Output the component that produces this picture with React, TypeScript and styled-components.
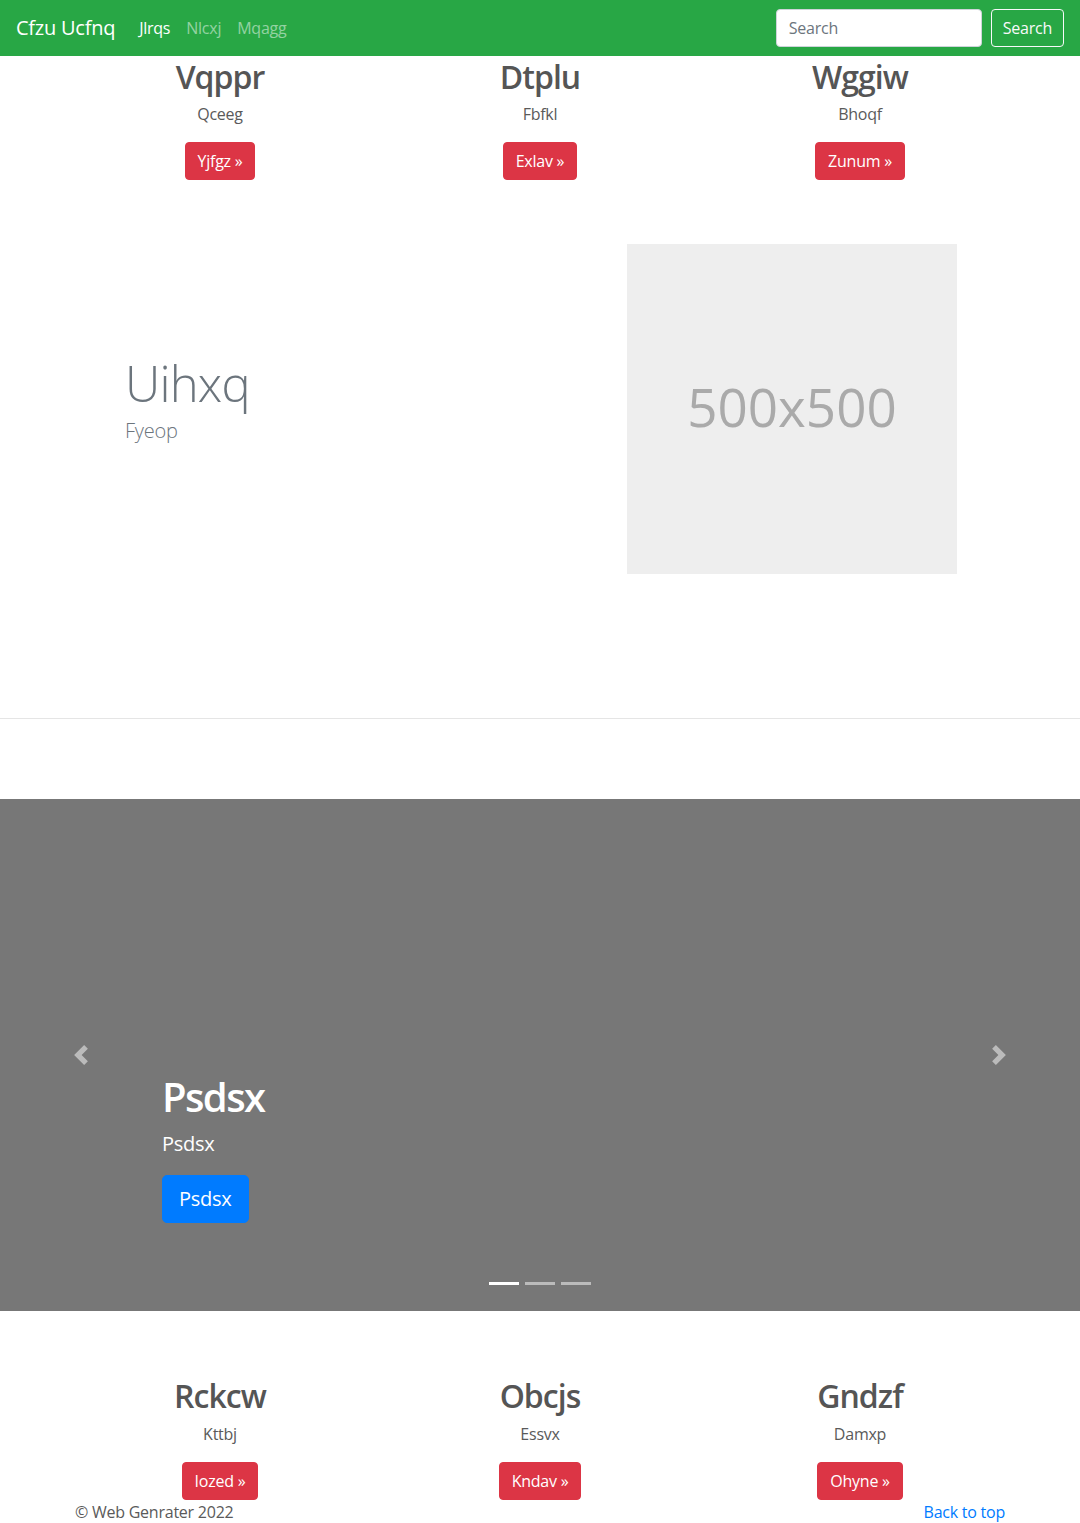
import styled, { createGlobalStyle } from "styled-components";

const GlobalStyle = createGlobalStyle`
  * {
    box-sizing: border-box;
  }

  body {
    margin: 0;
    font-family: "Open Sans", "Noto Sans", "Liberation Sans", sans-serif;
    font-size: 16px;
    line-height: 1.5;
    letter-spacing: -0.015em;
    color: #5a5a5a;
    background: #fff;
  }
`;

type Feature = {
  title: string;
  text: string;
  action: string;
};

const topFeatures: Feature[] = [
  { title: "Vqppr", text: "Qceeg", action: "Yjfgz" },
  { title: "Dtplu", text: "Fbfkl", action: "Exlav" },
  { title: "Wggiw", text: "Bhoqf", action: "Zunum" },
];

const bottomFeatures: Feature[] = [
  { title: "Rckcw", text: "Kttbj", action: "Iozed" },
  { title: "Obcjs", text: "Essvx", action: "Kndav" },
  { title: "Gndzf", text: "Damxp", action: "Ohyne" },
];

const navItems = ["Jlrqs", "Nlcxj", "Mqagg"];

const App = () => {
  return (
    <>
      <GlobalStyle />
      <Navbar>
        <NavLeft>
          <Brand href="#">Cfzu Ucfnq</Brand>
          <NavList>
            {navItems.map((item, i) => (
              <li key={item}>
                <NavLink href="#" $active={i === 0}>
                  {item}
                </NavLink>
              </li>
            ))}
          </NavList>
        </NavLeft>
        <SearchForm onSubmit={(e) => e.preventDefault()}>
          <SearchInput type="text" placeholder="Search" aria-label="Search" />
          <SearchButton type="submit">Search</SearchButton>
        </SearchForm>
      </Navbar>

      <Marketing>
        {topFeatures.map((f) => (
          <FeatureCol key={f.title}>
            <FeatureTitle>{f.title}</FeatureTitle>
            <FeatureText>{f.text}</FeatureText>
            <DangerButton href="#">{f.action} &raquo;</DangerButton>
          </FeatureCol>
        ))}
      </Marketing>

      <Featurette>
        <FeaturetteBody>
          <FeaturetteHeading>Uihxq</FeaturetteHeading>
          <Lead>Fyeop</Lead>
        </FeaturetteBody>
        <Placeholder>
          <span>500x500</span>
        </Placeholder>
      </Featurette>

      <Divider />

      <Carousel>
        <Control $side="left" href="#" aria-label="Previous">
          <svg viewBox="0 0 8 8" width="20" height="20" fill="#fff">
            <path d="M5.25 0l-4 4 4 4 1.5-1.5L4.25 4l2.5-2.5L5.25 0z" />
          </svg>
        </Control>
        <Control $side="right" href="#" aria-label="Next">
          <svg viewBox="0 0 8 8" width="20" height="20" fill="#fff">
            <path d="M2.75 0l-1.5 1.5L3.75 4l-2.5 2.5L2.75 8l4-4-4-4z" />
          </svg>
        </Control>
        <Caption>
          <CaptionTitle>Psdsx</CaptionTitle>
          <CaptionText>Psdsx</CaptionText>
          <PrimaryButton href="#">Psdsx</PrimaryButton>
        </Caption>
        <Indicators>
          {[0, 1, 2].map((i) => (
            <Indicator key={i} $active={i === 0} />
          ))}
        </Indicators>
      </Carousel>

      <Marketing $compact>
        {bottomFeatures.map((f) => (
          <FeatureCol key={f.title} $compact>
            <FeatureTitle>{f.title}</FeatureTitle>
            <FeatureText>{f.text}</FeatureText>
            <DangerButton href="#">{f.action} &raquo;</DangerButton>
          </FeatureCol>
        ))}
      </Marketing>

      <Footer>
        <span>&copy; Web Genrater 2022</span>
        <TopLink href="#">Back to top</TopLink>
      </Footer>
    </>
  );
};

const Navbar = styled.nav`
  display: flex;
  align-items: center;
  justify-content: space-between;
  height: 56px;
  padding: 0 16px;
  background-color: #28a745;
`;

const NavLeft = styled.div`
  display: flex;
  align-items: center;
`;

const Brand = styled.a`
  margin-right: 16px;
  font-size: 20px;
  line-height: 30px;
  color: #fff;
  text-decoration: none;
`;

const NavList = styled.ul`
  display: flex;
  margin: 0;
  padding: 0;
  list-style: none;
`;

const NavLink = styled.a<{ $active?: boolean }>`
  display: block;
  padding: 8px;
  color: ${({ $active }) => ($active ? "#fff" : "rgba(255, 255, 255, 0.5)")};
  text-decoration: none;
`;

const SearchForm = styled.form`
  display: flex;
  align-items: center;
  gap: 9px;
`;

const SearchInput = styled.input`
  width: 206px;
  height: 38px;
  padding: 6px 12px;
  font-family: inherit;
  font-size: 16px;
  letter-spacing: inherit;
  color: #495057;
  background: #fff;
  border: 1px solid #ced4da;
  border-radius: 4px;

  &::placeholder {
    color: #6c757d;
  }
`;

const SearchButton = styled.button`
  height: 38px;
  padding: 6px 11px;
  font-family: inherit;
  font-size: 16px;
  letter-spacing: inherit;
  color: #f8f9fa;
  background: transparent;
  border: 1px solid #f8f9fa;
  border-radius: 4px;
`;

const Marketing = styled.section<{ $compact?: boolean }>`
  display: grid;
  grid-template-columns: repeat(3, 1fr);
  width: 960px;
  margin: ${({ $compact }) => ($compact ? "64px auto 0" : "0 auto")};
`;

const FeatureCol = styled.div<{ $compact?: boolean }>`
  display: flex;
  flex-direction: column;
  align-items: center;
  padding: 0 15px;
  margin-bottom: ${({ $compact }) => ($compact ? "0" : "40px")};
  text-align: center;
`;

const FeatureTitle = styled.h2`
  margin: 2px 0 6px;
  font-size: 32px;
  font-weight: 600;
  line-height: 1.2;
  letter-spacing: -0.03em;
  color: #555;
`;

const FeatureText = styled.p`
  margin: 0 12px 16px;
`;

const DangerButton = styled.a`
  display: inline-block;
  padding: 6px 12px;
  font-size: 16px;
  line-height: 24px;
  color: #fff;
  text-decoration: none;
  background-color: #dc3545;
  border: 1px solid #dc3545;
  border-radius: 4px;
`;

const Featurette = styled.section`
  display: grid;
  grid-template-columns: 567px 330px;
  align-items: center;
  width: 960px;
  margin: 0 auto;
  padding: 24px 0 64px;
`;

const FeaturetteBody = styled.div`
  padding: 0 0 14px 65px;
`;

const FeaturetteHeading = styled.h2`
  margin: 0 0 8px;
  font-size: 49px;
  font-weight: 300;
  line-height: 1;
  letter-spacing: -0.8px;
  color: #6c757d;
`;

const Lead = styled.p`
  margin: 0;
  font-size: 20px;
  font-weight: 300;
  color: #6c757d;
`;

const Placeholder = styled.div`
  display: flex;
  align-items: center;
  justify-content: center;
  width: 330px;
  height: 330px;
  padding-bottom: 6px;
  background-color: #eee;
  font-size: 53px;
  letter-spacing: 0;
  color: #aaa;
`;

const Divider = styled.hr`
  margin: 80px 0;
  border: 0;
  border-top: 1px solid rgba(0, 0, 0, 0.1);
`;

const Carousel = styled.section`
  position: relative;
  height: 512px;
  background-color: #777;
`;

const Control = styled.a<{ $side: "left" | "right" }>`
  position: absolute;
  top: 0;
  bottom: 0;
  ${({ $side }) => ($side === "left" ? "left: 0;" : "right: 0;")}
  display: flex;
  align-items: center;
  justify-content: center;
  width: 15%;
  opacity: 0.5;
`;

const Caption = styled.div`
  position: absolute;
  left: 15%;
  right: 15%;
  bottom: 88px;
  color: #fff;
`;

const CaptionTitle = styled.h1`
  margin: 0 0 8px;
  font-size: 40px;
  font-weight: 600;
  line-height: 1.2;
  letter-spacing: -0.04em;
`;

const CaptionText = styled.p`
  margin: 0 0 16px;
  font-size: 20px;
`;

const PrimaryButton = styled.a`
  display: inline-block;
  padding: 8px 16px;
  font-size: 20px;
  line-height: 30px;
  color: #fff;
  text-decoration: none;
  background-color: #007bff;
  border: 1px solid #007bff;
  border-radius: 5px;
`;

const Indicators = styled.ol`
  position: absolute;
  left: 0;
  right: 0;
  bottom: 26px;
  display: flex;
  justify-content: center;
  margin: 0;
  padding: 0;
  list-style: none;
`;

const Indicator = styled.li<{ $active?: boolean }>`
  width: 30px;
  height: 3px;
  margin: 0 3px;
  background-color: #fff;
  opacity: ${({ $active }) => ($active ? 1 : 0.5)};
`;

const Footer = styled.footer`
  display: flex;
  justify-content: space-between;
  width: 960px;
  margin: 0 auto;
  padding: 0 15px 16px;
  color: #5a5a5a;
`;

const TopLink = styled.a`
  color: #007bff;
  text-decoration: none;
`;

export default App;
